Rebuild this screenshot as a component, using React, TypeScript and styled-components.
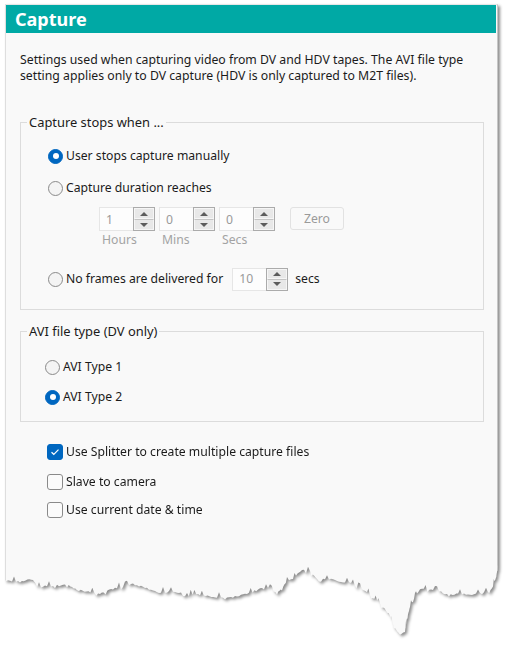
import React from "react";
import styled, { createGlobalStyle } from "styled-components";

const GlobalStyle = createGlobalStyle`
  html, body {
    margin: 0;
    padding: 0;
    background: #ffffff;
  }
  body {
    font-family: "Segoe UI", "Noto Sans", "Open Sans", sans-serif;
    font-size: 12.2px;
    color: #1b1b1b;
  }
`;

/* Torn paper edge along the bottom of the panel, in panel coordinates. */
const W = 493;
const OX = 5;
const OY = 4;
const tornBase: [number, number][] = [
  [498, 550], [498, 565], [496, 578], [493, 586], [488, 592], [480, 594],
  [470, 595], [460, 594], [447, 594], [433, 590], [420, 589], [417, 594],
  [410, 607], [407, 618], [405, 632], [400, 634], [394, 628], [390, 615],
  [380, 604], [367, 592], [353, 584], [333, 580], [317, 579], [310, 572],
  [302, 570], [293, 579], [287, 582], [277, 594], [270, 589], [260, 589],
  [247, 594], [233, 597], [217, 597], [200, 595], [187, 594], [173, 592],
  [157, 592], [143, 587], [133, 584], [113, 589], [100, 594], [77, 590],
  [67, 585], [37, 587], [33, 579], [20, 582], [4, 580],
];

function noise(i: number): number {
  const s = Math.sin(i * 12.9898 + 78.233) * 43758.5453;
  return s - Math.floor(s);
}

function buildTornClip(): string {
  const pts: string[] = ["0 0", `${W}px 0`];
  let k = 0;
  for (let i = 0; i < tornBase.length - 1; i++) {
    const [x1, y1] = tornBase[i];
    const [x2, y2] = tornBase[i + 1];
    const len = Math.hypot(x2 - x1, y2 - y1);
    const steps = Math.max(1, Math.round(len / 2));
    for (let s = 0; s < steps; s++) {
      const t = s / steps;
      const x = x1 + (x2 - x1) * t;
      const y = y1 + (y2 - y1) * t;
      const n = noise(k++);
      const dy = n > 0.88 ? -5 * n : n < 0.08 ? 2.5 : (n - 0.5) * 2.5;
      const px = Math.min(W, Math.max(0, x - OX));
      pts.push(`${px.toFixed(1)}px ${(y - OY + dy).toFixed(1)}px`);
    }
  }
  const [lx, ly] = tornBase[tornBase.length - 1];
  pts.push(`${Math.max(0, lx - OX)}px ${ly - OY}px`);
  pts.push(`0 ${ly - OY}px`);
  return `polygon(${pts.join(", ")})`;
}

const tornClip = buildTornClip();

const Page = styled.div`
  padding: ${OY}px 0 0 ${OX}px;
  filter: drop-shadow(2px 2.5px 1.8px rgba(0, 0, 0, 0.45));
`;

const Panel = styled.div`
  box-sizing: border-box;
  width: ${W}px;
  height: 641px;
  background: #f9f9f9;
  border-top: 1px solid #e6e6e6;
  border-left: 1px solid #dedede;
  border-right: 1px solid #c6c6c6;
  clip-path: ${tornClip};
  display: flex;
  flex-direction: column;
`;

const Header = styled.div`
  height: 28px;
  background: #00a9a5;
  color: #ffffff;
  font-weight: 700;
  font-size: 18px;
  display: flex;
  align-items: center;
  padding-left: 9px;
  margin-right: 1px;
`;

const Body = styled.div`
  padding: 19px 13px 0 14px;
  display: flex;
  flex-direction: column;
`;

const Description = styled.p`
  margin: 0;
  font-size: 12.25px;
  line-height: 16px;
  white-space: nowrap;
`;

const Group = styled.fieldset<{ $top: number; $padTop: number; $padBottom: number }>`
  margin: ${(p) => p.$top}px 0 0;
  padding: ${(p) => p.$padTop}px 0 ${(p) => p.$padBottom}px 0;
  border: 1px solid #dcdcdc;
  min-width: 0;
`;

const Legend = styled.legend`
  margin-left: 6px;
  padding: 0 2px;
  font-size: 12.9px;
  line-height: 16px;
`;

const Stack = styled.div<{ $indent: number }>`
  display: flex;
  flex-direction: column;
  padding-left: ${(p) => p.$indent}px;
`;

const Row = styled.label<{ $top?: number; $h?: number }>`
  display: flex;
  align-items: center;
  height: ${(p) => p.$h ?? 20}px;
  margin-top: ${(p) => p.$top ?? 0}px;
  line-height: 16px;
`;

const RadioMark = styled.span<{ $on?: boolean }>`
  box-sizing: border-box;
  width: 15px;
  height: 15px;
  border-radius: 50%;
  margin-right: 3px;
  flex: none;
  background: ${(p) => (p.$on ? "#0067c0" : "#f4f4f4")};
  border: 1px solid ${(p) => (p.$on ? "#0067c0" : "#8a8a8a")};
  display: flex;
  align-items: center;
  justify-content: center;
  &::after {
    content: "";
    display: ${(p) => (p.$on ? "block" : "none")};
    width: 6px;
    height: 6px;
    border-radius: 50%;
    background: #ffffff;
  }
`;

const CheckMark = styled.span<{ $on?: boolean }>`
  box-sizing: border-box;
  width: 16px;
  height: 16px;
  border-radius: 3px;
  margin-right: 3px;
  flex: none;
  background: ${(p) => (p.$on ? "#0067c0" : "#fbfbfb")};
  border: 1px solid ${(p) => (p.$on ? "#0067c0" : "#8a8a8a")};
  display: flex;
  align-items: center;
  justify-content: center;
`;

const DurationRow = styled.div`
  display: flex;
  align-items: flex-start;
  gap: 4px;
  margin-top: 9px;
  padding-left: 51px;
`;

const SpinField = styled.div`
  display: flex;
  flex-direction: column;
`;

const SpinBox = styled.div<{ $h?: number; $left?: number }>`
  box-sizing: border-box;
  display: flex;
  width: 56px;
  height: ${(p) => p.$h ?? 24}px;
  margin-left: ${(p) => p.$left ?? 0}px;
`;

const SpinValue = styled.div`
  flex: 1;
  box-sizing: border-box;
  border: 1px solid #e6e6e6;
  border-right: none;
  background: #fdfdfd;
  color: #9a9a9a;
  padding-left: 6px;
  display: flex;
  align-items: center;
`;

const SpinButtons = styled.div`
  box-sizing: border-box;
  width: 22px;
  border: 1px solid #ababab;
  background: #e8e8e8;
  display: flex;
  flex-direction: column;
`;

const SpinHalf = styled.div<{ $down?: boolean }>`
  flex: 1;
  display: flex;
  align-items: center;
  justify-content: center;
  border: 1px solid #f6f6f6;
  border-top-color: ${(p) => (p.$down ? "#c4c4c4" : "#f6f6f6")};
  &::after {
    content: "";
    width: 0;
    height: 0;
    border-left: 4px solid transparent;
    border-right: 4px solid transparent;
    ${(p) =>
      p.$down
        ? "border-top: 4px solid #5c5c5c;"
        : "border-bottom: 4px solid #5c5c5c;"}
  }
`;

const Caption = styled.span`
  margin-top: 1px;
  padding-left: 3px;
  line-height: 16px;
  color: #a3a3a3;
`;

const ZeroButton = styled.button`
  box-sizing: border-box;
  width: 54px;
  height: 23px;
  margin-left: 11px;
  border: 1px solid #e2e2e2;
  border-radius: 3px;
  background: #f9f9f9;
  color: #9a9a9a;
  font: inherit;
  padding: 0;
`;

const Suffix = styled.span`
  margin-left: 7px;
`;

const Checks = styled.div`
  display: flex;
  flex-direction: column;
  margin-top: 20px;
  padding-left: 27px;
`;

function Radio({ on, label }: { on?: boolean; label: string }) {
  return (
    <>
      <RadioMark $on={on} />
      <span>{label}</span>
    </>
  );
}

function Spinner({ value, h, left }: { value: string; h?: number; left?: number }) {
  return (
    <SpinBox $h={h} $left={left}>
      <SpinValue>{value}</SpinValue>
      <SpinButtons>
        <SpinHalf />
        <SpinHalf $down />
      </SpinButtons>
    </SpinBox>
  );
}

function Check({ on, label, top }: { on?: boolean; label: string; top?: number }) {
  return (
    <Row $top={top}>
      <CheckMark $on={on}>
        {on && (
          <svg width="10" height="8" viewBox="0 0 10 8">
            <polyline
              points="1.5,4.2 3.8,6.3 8.5,1.6"
              fill="none"
              stroke="#ffffff"
              strokeWidth="1.2"
            />
          </svg>
        )}
      </CheckMark>
      <span>{label}</span>
    </Row>
  );
}

export default function App() {
  return (
    <>
      <GlobalStyle />
      <Page>
        <Panel>
          <Header>Capture</Header>
          <Body>
            <Description>
              Settings used when capturing video from DV and HDV tapes. The AVI file type
              <br />
              setting applies only to DV capture (HDV is only captured to M2T files).
            </Description>

            <Group $top={30} $padTop={16} $padBottom={18}>
              <Legend>Capture stops when ...</Legend>
              <Stack $indent={27}>
                <Row>
                  <Radio on label="User stops capture manually" />
                </Row>
                <Row $top={12}>
                  <Radio label="Capture duration reaches" />
                </Row>
                <DurationRow>
                  <SpinField>
                    <Spinner value="1" />
                    <Caption>Hours</Caption>
                  </SpinField>
                  <SpinField>
                    <Spinner value="0" />
                    <Caption>Mins</Caption>
                  </SpinField>
                  <SpinField>
                    <Spinner value="0" />
                    <Caption>Secs</Caption>
                  </SpinField>
                  <ZeroButton type="button">Zero</ZeroButton>
                </DurationRow>
                <Row $top={19} $h={24}>
                  <Radio label="No frames are delivered for" />
                  <Spinner value="10" h={23} left={9} />
                  <Suffix>secs</Suffix>
                </Row>
              </Stack>
            </Group>

            <Group $top={13} $padTop={18} $padBottom={14}>
              <Legend>AVI file type (DV only)</Legend>
              <Stack $indent={24}>
                <Row>
                  <Radio label="AVI Type 1" />
                </Row>
                <Row $top={10}>
                  <Radio on label="AVI Type 2" />
                </Row>
              </Stack>
            </Group>

            <Checks>
              <Check on label="Use Splitter to create multiple capture files" />
              <Check top={10} label="Slave to camera" />
              <Check top={8} label="Use current date & time" />
            </Checks>
          </Body>
        </Panel>
      </Page>
    </>
  );
}
